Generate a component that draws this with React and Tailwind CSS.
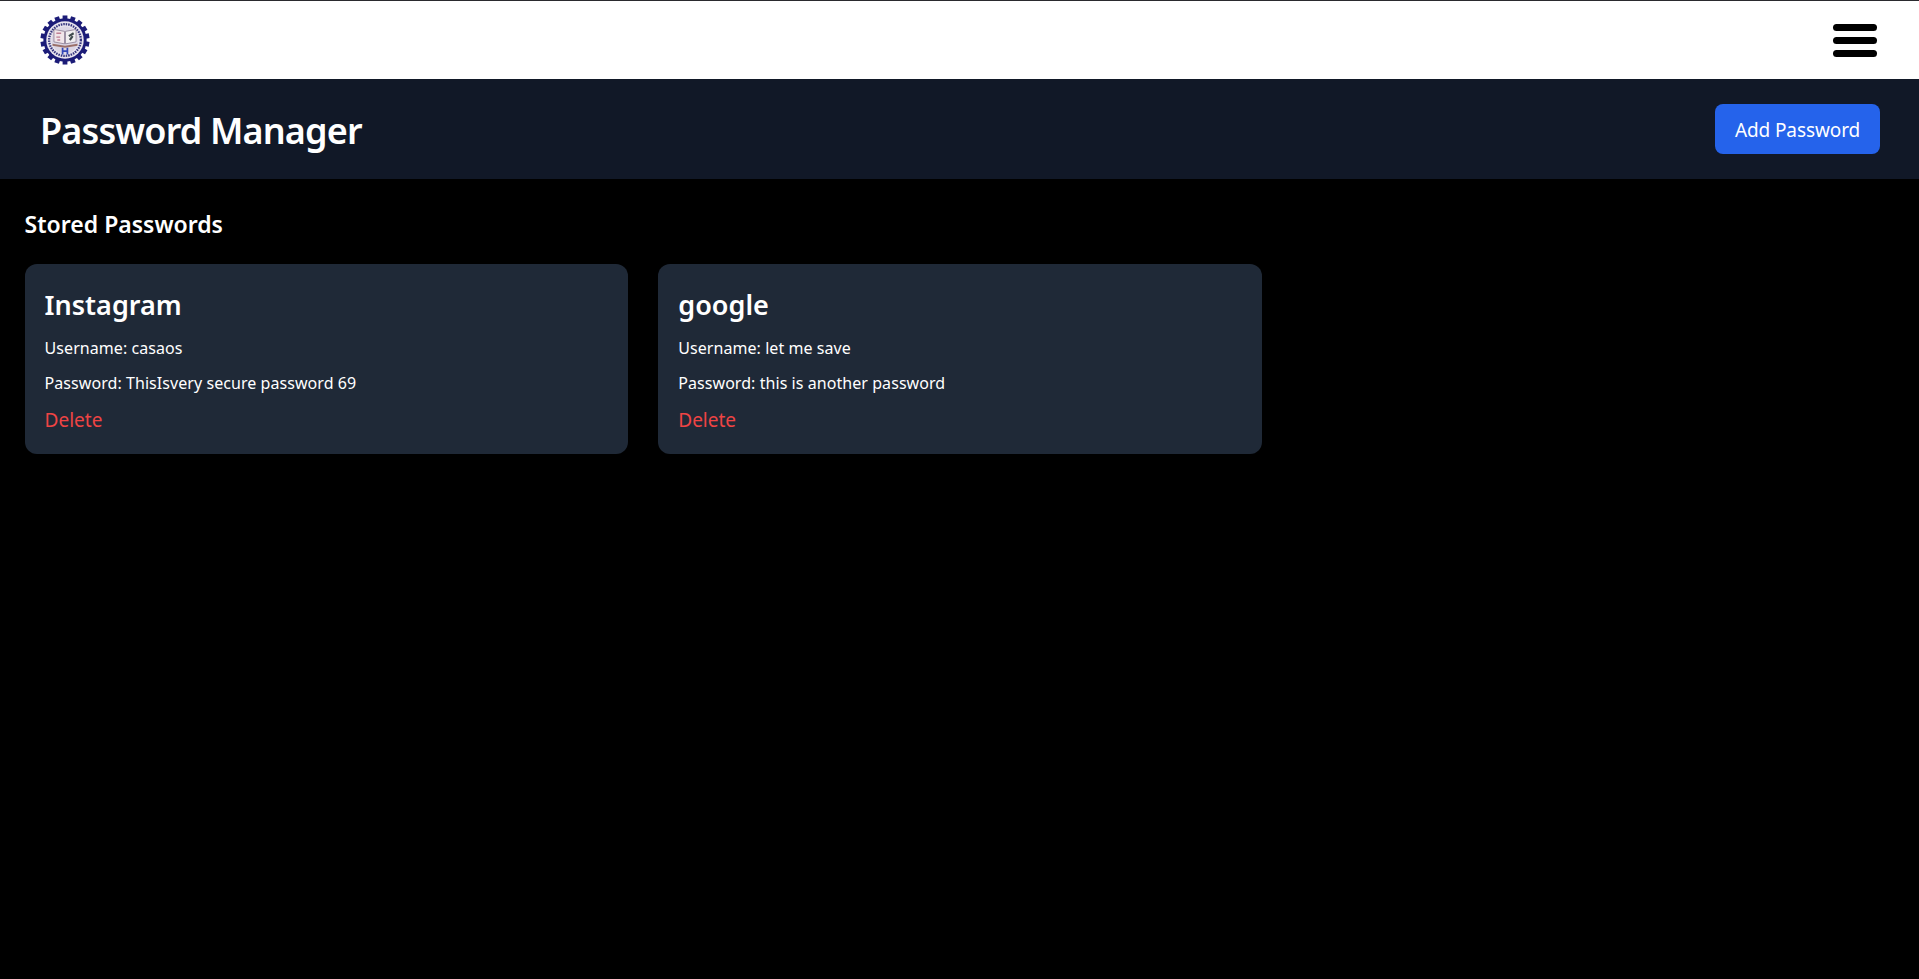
const passwords = [
  { id: 1, site: "Instagram", username: "casaos", password: "ThisIsvery secure password 69" },
  { id: 2, site: "google", username: "let me save", password: "this is another password" },
]

function Logo() {
  const teeth = Array.from({ length: 18 }, (_, i) => i * 20)
  return (
    <svg width="50" height="50" viewBox="0 0 52 52" className="block blur-[0.5px]">
      {teeth.map((a) => (
        <rect key={a} x="23.5" y="0.5" width="5" height="5" fill="#1c1c78" transform={`rotate(${a} 26 26)`} />
      ))}
      <circle cx="26" cy="26" r="22.5" fill="#1c1c78" />
      <circle cx="26" cy="26" r="19.5" fill="#e8e4ee" />
      <circle cx="26" cy="26" r="16.5" fill="none" stroke="#34347e" strokeWidth="2.4" strokeDasharray="1.6 1" />
      <circle cx="26" cy="26" r="14" fill="#dcd6e4" />
      <path d="M14.5 15l11 2v13l-11-2z" fill="#f1e6ea" stroke="#85788e" strokeWidth="0.8" />
      <path d="M37.5 15l-11 2v13l11-2z" fill="#f1eef0" stroke="#85788e" strokeWidth="0.8" />
      <path d="M17 19h5M17 23h4M18 26h3" stroke="#c07f94" strokeWidth="1.4" />
      <path d="M30 22l5-3M31 26l3-4" stroke="#3f4a4d" strokeWidth="2.2" />
      <path d="M13 30l13 2 13-2v2l-13 2-13-2z" fill="#9a6f68" />
      <path d="M23.5 34v7M28.5 34v7M23.5 37.5h5" stroke="#3348b8" strokeWidth="1.8" />
    </svg>
  )
}

function PasswordCard({ site, username, password }) {
  return (
    <div className="bg-[#1f2937] rounded-xl p-5">
      <h3 className="text-[27px] leading-[42px] font-semibold text-white">{site}</h3>
      <p className="mt-[10px] text-[16px] leading-[24px] tracking-[0.06px] text-white">Username: {username}</p>
      <p className="mt-[11px] text-[16px] leading-[24px] tracking-[0.06px] text-white">Password: {password}</p>
      <button type="button" className="block mt-[11px] text-[19px] leading-[28px] text-[#ef4444]">
        Delete
      </button>
    </div>
  )
}

export default function App() {
  return (
    <div className="min-h-screen bg-black text-white font-['Noto_Sans',sans-serif]">
      <nav className="h-[79px] bg-white border-t border-[#2a2a2e] flex items-center justify-between pl-[40px] pr-[42px]">
        <Logo />
        <button type="button" className="flex flex-col gap-[6px] w-[44px]">
          <span className="block h-[7px] rounded-full bg-black" />
          <span className="block h-[7px] rounded-full bg-black" />
          <span className="block h-[7px] rounded-full bg-black" />
        </button>
      </nav>

      <header className="h-[100px] bg-[#111827] flex items-center justify-between pl-[40px] pr-[39px]">
        <h1 className="text-[36px] leading-[54px] mt-[4px] tracking-[-0.85px] font-semibold">Password Manager</h1>
        <button type="button" className="w-[165px] h-[50px] pt-[2px] bg-[#2563eb] rounded-lg text-[19px] tracking-[-0.1px]">
          Add Password
        </button>
      </header>

      <main className="pl-[24.6px] pr-[23.4px] pt-[29px]">
        <h2 className="text-[23px] leading-[32px] font-semibold">Stored Passwords</h2>
        <div className="grid grid-cols-3 gap-[30px] mt-[24px]">
          {passwords.map((p) => (
            <PasswordCard key={p.id} {...p} />
          ))}
        </div>
      </main>
    </div>
  )
}
